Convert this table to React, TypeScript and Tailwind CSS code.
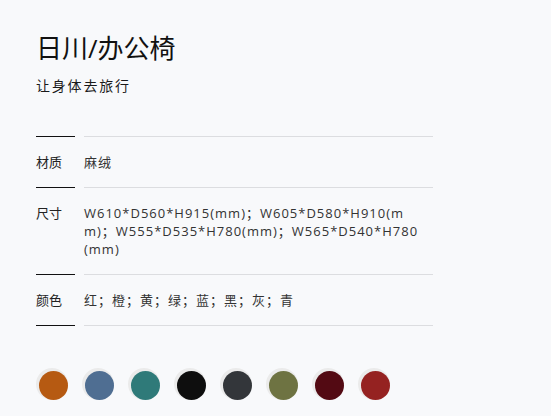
import React from "react";

const font = {
  fontFamily: '"Open Sans", "Noto Sans CJK SC", sans-serif',
};

const swatches = [
  "#b65a12",
  "#4f6e92",
  "#2f7a79",
  "#0e0e0e",
  "#33363a",
  "#6e7342",
  "#530a13",
  "#952221",
];

function Row({
  label,
  children,
  last,
}: {
  label: string;
  children: React.ReactNode;
  last?: boolean;
}) {
  return (
    <div className="flex gap-[9px]">
      <div
        className={`w-[39px] shrink-0 border-t border-[#111] py-4 text-[13px] leading-[18px] text-[#222] ${
          last ? "border-b" : ""
        }`}
      >
        {label}
      </div>
      <div
        className={`w-[349px] shrink-0 border-t border-[#dcdde0] py-4 text-[13px] leading-[18px] tracking-[1px] text-[#333] break-all ${
          last ? "border-b" : ""
        }`}
      >
        {children}
      </div>
    </div>
  );
}

export default function App() {
  return (
    <div
      className="min-h-[416px] w-full bg-[#f8f9fb] pl-[36px] pt-[32px]"
      style={font}
    >
      <div className="text-[26px] leading-[32px] text-[#111]">日川/办公椅</div>
      <div className="mt-[13px] text-[14px] leading-[18px] tracking-[1.8px] text-[#1a1a1a]">
        让身体去旅行
      </div>
      <div className="mt-[41px] flex flex-col">
        <Row label="材质">麻绒</Row>
        <Row label="尺寸">
          W610*D560*H915(mm)；W605*D580*H910(mm)；W555*D535*H780(mm)；W565*D540*H780(mm)
        </Row>
        <Row label="颜色" last>
          红；橙；黄；绿；蓝；黑；灰；青
        </Row>
      </div>
      <div className="mt-[42px] flex gap-[14px]">
        {swatches.map((c) => (
          <div
            key={c}
            className="relative h-[32px] w-[32px] rounded-full bg-[#ebebeb]"
          >
            <div
              className="absolute left-[3px] top-[3px] h-[29px] w-[29px] rounded-full"
              style={{ backgroundColor: c }}
            />
          </div>
        ))}
      </div>
    </div>
  );
}
